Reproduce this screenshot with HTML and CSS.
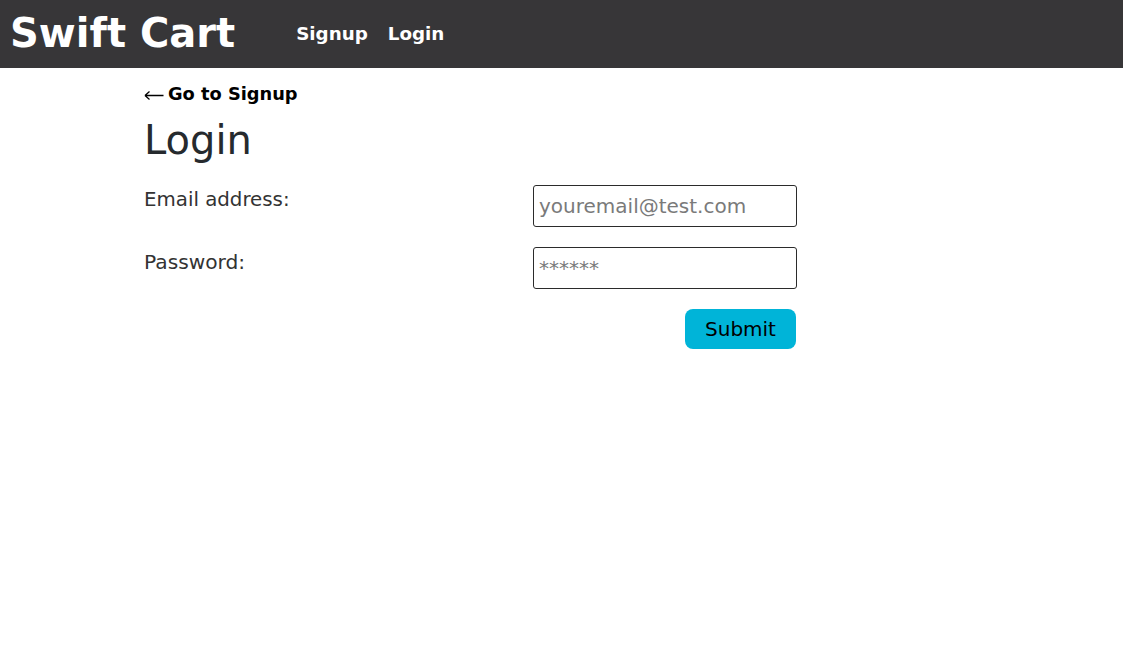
FILE: index.html
```html
<!DOCTYPE html>
<html lang="en">
<head>
<meta charset="utf-8">
<title>Swift Cart</title>
<link rel="stylesheet" href="styles.css">
</head>
<body>
<nav class="navbar">
  <a class="brand" href="#">Swift Cart</a>
  <div class="nav-links">
    <a class="nav-link" href="#">Signup</a>
    <a class="nav-link" href="#">Login</a>
  </div>
</nav>
<main class="container">
  <a class="back-link" href="#"><svg class="arrow" width="20" height="12" viewBox="0 0 20 12" aria-hidden="true"><path d="M1 6.5H19.5M1 6.5L5.5 2.5M1 6.5L5.5 10.5" fill="none" stroke="#000" stroke-width="1.3"/></svg>Go to Signup</a>
  <h1 class="title">Login</h1>
  <form class="login-form">
    <label class="field-label" for="email">Email address:</label>
    <input class="field-input" id="email" type="email" placeholder="youremail@test.com">
    <label class="field-label" for="password">Password:</label>
    <input class="field-input" id="password" type="password" placeholder="******">
    <div class="actions">
      <button class="submit-btn" type="submit">Submit</button>
    </div>
  </form>
</main>
</body>
</html>
```

FILE: styles.css
```css
* { box-sizing: border-box; }
html, body { margin: 0; padding: 0; background: #fff; }
body {
  font-family: "DejaVu Sans", "Noto Sans", sans-serif;
  color: #212529;
}
a { text-decoration: none; }

.navbar {
  height: 68px;
  background: #373638;
  display: flex;
  align-items: center;
  padding: 0 10px;
}
.brand {
  color: #fff;
  font-weight: 700;
  font-size: 40px;
  line-height: 1;
  margin-top: -2px;
}
.nav-links {
  display: flex;
  gap: 20px;
  margin-left: 61px;
}
.nav-link {
  color: #fff;
  font-weight: 700;
  font-size: 18.3px;
  line-height: 1;
}

.container {
  padding: 13px 0 0 144px;
}
.back-link {
  display: inline-flex;
  align-items: center;
  color: #000;
  font-weight: 700;
  font-size: 17.8px;
  line-height: 26px;
}
.arrow {
  margin-right: 4px;
  margin-top: 2px;
}
.title {
  margin: 9px 0 21px;
  font-size: 40px;
  font-weight: 400;
  line-height: 48px;
  color: #262a2e;
}

.login-form {
  display: grid;
  grid-template-columns: 389px 264px;
  row-gap: 20px;
  width: 653px;
}
.field-label {
  font-size: 19.8px;
  color: #333;
  line-height: 28px;
  padding-top: 1px;
}
.field-label[for="password"] { font-size: 20.2px; }
.field-input {
  height: 42px;
  width: 264px;
  border: 1px solid #2b2b2b;
  border-radius: 3px;
  padding: 0 5px;
  font-family: inherit;
  font-size: 20px;
  color: #333;
}
.field-input::placeholder { color: #7a7a7a; }
.actions {
  grid-column: 2;
  display: flex;
  justify-content: flex-end;
  padding-right: 1px;
}
.submit-btn {
  width: 111px;
  height: 40px;
  background: #00b4d8;
  border: none;
  border-radius: 8px;
  font-family: inherit;
  font-size: 20px;
  color: #000;
}
```
